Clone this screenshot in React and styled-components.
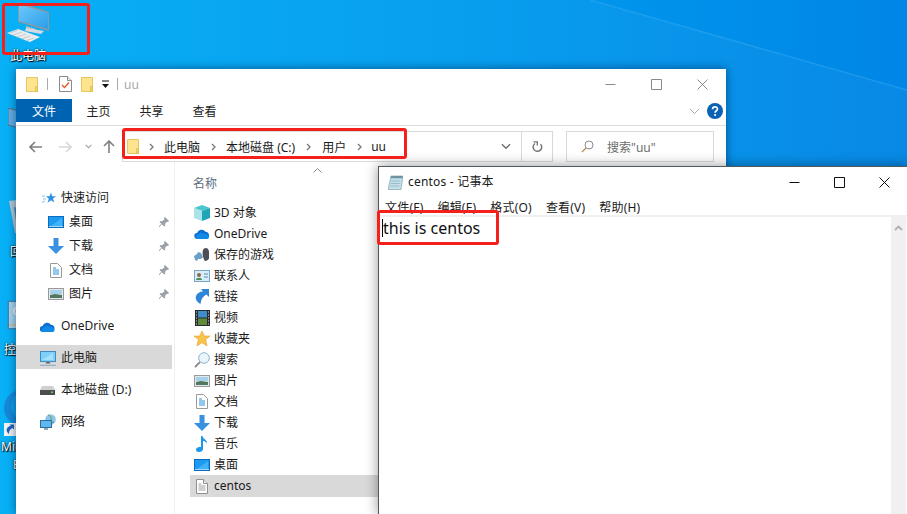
import React from "react";
import styled, { createGlobalStyle } from "styled-components";

const FONT = `"Noto Sans", "Noto Sans CJK SC", sans-serif`;

const Global = createGlobalStyle`
  html, body { margin: 0; padding: 0; background: #0090ea; }
  body { font-family: ${FONT}; font-size: 12px; color: #1a1a1a; overflow: hidden; }
  * { box-sizing: border-box; }
`;

const Desktop = styled.div`
  position: relative;
  width: 907px;
  height: 514px;
  overflow: hidden;
`;
const WallpaperSvg = styled.svg`
  position: absolute;
  left: 0;
  top: 0;
`;
const DesktopIcon = styled.div`
  position: absolute;
  left: ${(p) => p.$x}px;
  top: ${(p) => p.$y}px;
  line-height: 0;
`;
const DesktopLabel = styled.div`
  position: absolute;
  left: ${(p) => p.$x}px;
  top: ${(p) => p.$y}px;
  color: #fff;
  font-size: 12px;
  line-height: 16px;
  white-space: nowrap;
  text-shadow: 0 0 2px #000, 1px 1px 1px #000;
`;
const Annotation = styled.div`
  position: absolute;
  left: ${(p) => p.$x}px;
  top: ${(p) => p.$y}px;
  width: ${(p) => p.$w}px;
  height: ${(p) => p.$h}px;
  border: 3px solid #f3201c;
  border-radius: 3px;
`;

const Explorer = styled.section`
  position: absolute;
  left: 16px;
  top: 69px;
  width: 710px;
  height: 445px;
  background: #fff;
  display: flex;
  flex-direction: column;
  box-shadow: 0 0 9px rgba(0, 20, 60, 0.55);
`;
const TitleBar = styled.div`
  height: ${(p) => p.$h}px;
  flex: none;
  display: flex;
  align-items: center;
  padding-left: ${(p) => p.$pl}px;
`;
const QuickDivider = styled.span`
  width: 1px;
  height: 12px;
  background: #aaa;
  margin: 0 ${(p) => p.$r}px 0 ${(p) => p.$l}px;
`;
const QuickGap = styled.span`
  width: ${(p) => p.$w}px;
`;
const DimTitle = styled.span`
  color: #a8a8a8;
  font-size: 12px;
`;
const WindowControls = styled.div`
  margin-left: auto;
  display: flex;
  align-items: center;
  gap: ${(p) => p.$gap}px;
  padding-right: ${(p) => p.$pr}px;
  line-height: 0;
`;
const RibbonTabs = styled.div`
  height: 27px;
  flex: none;
  display: flex;
  align-items: flex-start;
  border-bottom: 1px solid #dcdcdc;
`;
const FileTab = styled.div`
  width: 56px;
  height: 23px;
  background: #0063b1;
  color: #fff;
  display: flex;
  align-items: center;
  justify-content: center;
`;
const RibbonTab = styled.div`
  width: 53px;
  height: 23px;
  display: flex;
  align-items: center;
  justify-content: center;
  color: #222;
`;
const RibbonEnd = styled.div`
  margin-left: auto;
  height: 23px;
  display: flex;
  align-items: center;
  gap: 7px;
  padding: 1px 3px 0 0;
  line-height: 0;
`;
const NavBar = styled.div`
  height: 36px;
  flex: none;
  display: flex;
  align-items: center;
  padding: 5px 12px 0 12px;
`;
const NavButton = styled.div`
  width: ${(p) => p.$w}px;
  margin-left: ${(p) => p.$ml || 0}px;
  flex: none;
  display: flex;
  justify-content: center;
  line-height: 0;
`;
const AddressBox = styled.div`
  width: 431px;
  height: 31px;
  flex: none;
  border: 1px solid #d9d9d9;
  display: flex;
  align-items: center;
`;
const Crumbs = styled.div`
  flex: 1;
  display: flex;
  align-items: center;
  padding-left: 4px;
  color: #1a1a1a;
`;
const CrumbSep = styled.span`
  display: flex;
  line-height: 0;
  margin: 0 ${(p) => p.$r}px 0 ${(p) => p.$l}px;
`;
const BoxButton = styled.div`
  width: ${(p) => p.$w}px;
  height: 100%;
  border-left: ${(p) => (p.$line ? "1px solid #d9d9d9" : "none")};
  display: flex;
  align-items: center;
  justify-content: center;
  line-height: 0;
`;
const SearchBox = styled.div`
  margin-left: 13px;
  width: 148px;
  height: 31px;
  flex: none;
  border: 1px solid #d9d9d9;
  display: flex;
  align-items: center;
  gap: 13px;
  padding-left: 14px;
  color: #6d6d6d;
`;
const Body = styled.div`
  flex: 1;
  display: flex;
  min-height: 0;
`;
const Sidebar = styled.nav`
  width: 159px;
  flex: none;
  border-right: 1px solid #efefef;
  padding-top: 23px;
`;
const SideRow = styled.div`
  width: 156px;
  height: 24px;
  display: flex;
  align-items: center;
  padding: 2px 0 0 ${(p) => p.$pl}px;
  gap: ${(p) => p.$gap}px;
  margin-top: ${(p) => p.$mt || 0}px;
  background: ${(p) => (p.$active ? "#d9d9d9" : "transparent")};
  line-height: 0;
`;
const RowText = styled.span`
  line-height: 16px;
  color: #1a1a1a;
`;
const Pin = styled.span`
  margin-left: auto;
  padding-right: 3px;
`;
const FileList = styled.div`
  flex: 1;
  min-width: 0;
  padding-left: 15px;
`;
const ListHeader = styled.div`
  height: 40px;
  display: flex;
  align-items: center;
  padding: 2px 0 0 3px;
  color: #5c6b7c;
  font-size: 12px;
`;
const SortCaret = styled.span`
  align-self: flex-start;
  margin: 4px 0 0 96px;
  line-height: 0;
`;
const FileRow = styled.div`
  width: 200px;
  height: ${(p) => (p.$active ? 22 : 21)}px;
  display: flex;
  align-items: center;
  gap: 4px;
  padding-left: 4px;
  background: ${(p) => (p.$active ? "#d9d9d9" : "transparent")};
  line-height: 0;
`;
const IconSlot = styled.span`
  width: 16px;
  height: 16px;
  flex: none;
  display: flex;
  align-items: center;
  justify-content: center;
`;

const Notepad = styled.section`
  position: absolute;
  left: 378px;
  top: 166px;
  width: 530px;
  height: 349px;
  background: #fff;
  border: 1px solid #4d5a60;
  display: flex;
  flex-direction: column;
  box-shadow: 0 0 12px rgba(0, 0, 0, 0.42);
`;
const NotepadTitle = styled.span`
  margin: 0 0 2px 5px;
  color: #1a1a1a;
  letter-spacing: 0.2px;
`;
const MenuBar = styled.div`
  height: 20px;
  flex: none;
  display: flex;
  align-items: center;
  gap: 14px;
  padding: 2px 0 0 6px;
  border-bottom: 2px solid #f0f0f0;
  color: #1a1a1a;
  letter-spacing: 0.2px;
`;
const EditorArea = styled.div`
  flex: 1;
  display: flex;
  min-height: 0;
`;
const EditorText = styled.div`
  flex: 1;
  padding: 2px 0 0 3px;
  font-size: 16px;
  line-height: 19px;
  color: #111;
  display: flex;
  align-items: flex-start;
`;
const Caret = styled.span`
  width: 1px;
  height: 18px;
  background: #000;
  flex: none;
`;
const Scrollbar = styled.div`
  width: 15px;
  flex: none;
  background: #f0f0f0;
  display: flex;
  justify-content: center;
  padding-top: 8px;
  line-height: 0;
  margin-right: 1px;
`;

/* ---------- drawings ---------- */
const Folder = ({ w = 12, h = 15 }) => (
  <svg width={w} height={h} viewBox="0 0 12 15">
    <path d="M.5.5h11v14H.5z" fill="#fde48e" stroke="#e8c65c" />
    <path d="M9.5 9.5h2v5h-2z" fill="#f5d46c" stroke="#dcb848" strokeWidth=".7" />
  </svg>
);
const Checklist = () => (
  <svg width="13" height="16" viewBox="0 0 13 16">
    <path d="M.5.5h8l4 4v11H.5z" fill="#fdfdfd" stroke="#8a8a8a" />
    <path d="M8.5.5v4h4" fill="#eee" stroke="#8a8a8a" />
    <path d="M3 9l2.5 2.5L10 6.5" fill="none" stroke="#e8592c" strokeWidth="1.4" />
  </svg>
);
const DropMini = () => (
  <svg width="9" height="9" viewBox="0 0 9 9">
    <path d="M1 1h7" stroke="#111" />
    <path d="M1 4h7L4.500 8z" fill="#111" />
  </svg>
);
const Minimize = ({ c }) => (
  <svg width="11" height="11" viewBox="0 0 11 11">
    <path d="M.5 5.500h10" stroke={c} />
  </svg>
);
const Maximize = ({ c }) => (
  <svg width="11" height="11" viewBox="0 0 11 11">
    <path d="M.5.5h10v10H.5z" fill="none" stroke={c} />
  </svg>
);
const CloseX = ({ c }) => (
  <svg width="11" height="11" viewBox="0 0 11 11">
    <path d="M.5.5l10 10M10.500.5l-10 10" fill="none" stroke={c} />
  </svg>
);
const Chevron = ({ c = "#999", w = 11, sw = 1 }) => (
  <svg width={w} height="7" viewBox="0 0 11 7">
    <path d="M1 1l4.500 4.500L10 1" fill="none" stroke={c} strokeWidth={sw} />
  </svg>
);
const HelpIcon = () => (
  <svg width="16" height="16" viewBox="0 0 16 16">
    <circle cx="8" cy="8" r="8" fill="#0a62b4" />
    <path d="M5.600 6.200c0-3 4.900-3 4.900-.2 0 1.800-2.400 1.800-2.400 3.700" fill="none" stroke="#fff" strokeWidth="1.700" />
    <circle cx="8.100" cy="12" r="1.100" fill="#fff" />
  </svg>
);
const ArrowLeft = ({ c }) => (
  <svg width="13" height="12" viewBox="0 0 13 12">
    <path d="M6 1L1 6l5 5M1 6h12" fill="none" stroke={c} strokeWidth="1.600" />
  </svg>
);
const ArrowRight = ({ c }) => (
  <svg width="13" height="12" viewBox="0 0 13 12">
    <path d="M7 1l5 5-5 5M12 6H0" fill="none" stroke={c} strokeWidth="1.600" />
  </svg>
);
const ArrowUp = ({ c }) => (
  <svg width="12" height="13" viewBox="0 0 12 13">
    <path d="M1 6l5-5 5 5M6 1v12" fill="none" stroke={c} strokeWidth="1.600" />
  </svg>
);
const CrumbChevron = () => (
  <svg width="5" height="8" viewBox="0 0 5 8">
    <path d="M1 1l3 3-3 3" fill="none" stroke="#777" strokeWidth="1.300" />
  </svg>
);
const Refresh = () => (
  <svg width="11" height="12" viewBox="0 0 11 12">
    <path d="M8.600 3.200A4.300 4.300 0 1 1 3 2.500" fill="none" stroke="#777" strokeWidth="1.500" />
    <path d="M1.500.8h3.800v3.600" fill="none" stroke="#777" strokeWidth="1.300" />
  </svg>
);
const Magnifier = () => (
  <svg width="13" height="13" viewBox="0 0 13 13">
    <circle cx="8" cy="5" r="4" fill="#fff" stroke="#8a8a8a" />
    <path d="M5 8L1 12" stroke="#c08a58" strokeWidth="1.300" />
  </svg>
);
const StarBlue = () => (
  <svg width="14" height="13" viewBox="0 0 14 13">
    <path d="M9 .5l1.200 3.700H14l-3 2.400 1.200 3.900L9 8.200l-3.500 2.500L6.800 6.800 4 4.200h3.600z" fill="#2f8fe0" />
    <path d="M0 4h3M1 7h3M0 10.500l3-1.500" stroke="#7cc2f2" />
  </svg>
);
const DesktopSmall = () => (
  <svg width="16" height="12" viewBox="0 0 16 12">
    <rect x=".5" y=".5" width="15" height="11" fill="#1e9af0" stroke="#0a6cbc" />
    <path d="M3 10L14 2v8z" fill="#3fb2f8" />
    <path d="M1 10.500h14" stroke="#fff" strokeOpacity=".6" />
  </svg>
);
const DownArrow = () => (
  <svg width="16" height="16" viewBox="0 0 16 16">
    <path d="M5.500 0h5v8H16l-8 8-8-8h5.500z" fill="#3a90e0" />
  </svg>
);
const DocBlue = () => (
  <svg width="12" height="15" viewBox="0 0 12 15">
    <path d="M.5.5h7l4 4v10H.5z" fill="#fff" stroke="#9a9a9a" />
    <path d="M3 5h3M3 7h6M3 9h6M3 11h6" stroke="#2a90d8" />
  </svg>
);
const Picture = () => (
  <svg width="16" height="12" viewBox="0 0 16 12">
    <rect x=".5" y=".5" width="15" height="11" fill="#dfe9ef" stroke="#9a9a9a" />
    <rect x="2" y="2" width="12" height="4" fill="#a7d0ea" />
    <path d="M2 7l5-1 7 1v3H2z" fill="#52775e" />
  </svg>
);
const PinIcon = () => (
  <svg width="10" height="10" viewBox="0 0 10 10">
    <path d="M6 0l4 4-1 1-1-.3-2 2 .2 1.800L5.200 9.500 .5 5 1.500 4l1.800.2 2-2L5 1z" fill="#9aa1a8" />
    <path d="M2.500 7L0 10" stroke="#9aa1a8" />
  </svg>
);
const Cloud = ({ w = 15 }) => (
  <svg width={w} height="11" viewBox="0 0 15 11">
    <path d="M3 11a3 3 0 0 1-.4-6A4.800 4.800 0 0 1 11 3.800 3.700 3.700 0 0 1 12 11z" fill="#0a6fd0" />
    <path d="M2 10.500a2.500 2.500 0 0 1 2-4c1-2 4-2.300 5.500-.6 2-.8 5 1 5 3.300-.2 1-1 1.700-2 1.800H3z" fill="#0f8ae8" />
  </svg>
);
const PcSmall = () => (
  <svg width="16" height="15" viewBox="0 0 16 15">
    <rect x=".5" y=".5" width="15" height="10" fill="#7fd0f8" stroke="#3f8cbe" />
    <path d="M2 9L13 2v7z" fill="#a4e0fb" />
    <path d="M6 11h4v1.500H6zM0 14.300h16" stroke="#90a6b8" />
  </svg>
);
const Drive = () => (
  <svg width="15" height="9" viewBox="0 0 15 9">
    <path d="M2 0h11l2 4v5H0V4z" fill="#cfcfcf" />
    <rect y="4" width="15" height="5" fill="#4d4d4d" />
    <rect x="11" y="5.500" width="2" height="1.500" fill="#5ad35a" />
  </svg>
);
const NetworkIcon = () => (
  <svg width="16" height="16" viewBox="0 0 16 16">
    <circle cx="10.500" cy="5.500" r="5.300" fill="#8cc4ea" />
    <path d="M8 1c3 1 4 3 2.500 5S12 9 14 8" stroke="#5f9e5c" fill="none" />
    <rect x=".5" y="6.500" width="11" height="7" fill="#5fb8ee" stroke="#2a6f9e" />
    <path d="M4 15h4" stroke="#6f8ba0" strokeWidth="1.500" />
  </svg>
);
const Cube = () => (
  <svg width="16" height="16" viewBox="0 0 16 16">
    <path d="M8 0l8 3-8 3-8-3z" fill="#49c6cf" />
    <path d="M0 3l8 3v10l-8-3z" fill="#a8e3ea" />
    <path d="M16 3L8 6v10l8-3z" fill="#1fa5b6" />
  </svg>
);
const Gamepad = () => (
  <svg width="16" height="16" viewBox="0 0 16 16">
    <path d="M9 3c1-3 6-3 6 2v6c0 2-3 3-4 3-2-2-3-8-2-11z" fill="#4c4f55" />
    <path d="M0 9l3-2 1-2 3 1 1 2 1 2-2 2H4l-1 2-2-1z" fill="#6c9fc8" />
  </svg>
);
const Contact = () => (
  <svg width="16" height="12" viewBox="0 0 16 12">
    <rect x=".5" y=".5" width="15" height="11" fill="#d9ebf7" stroke="#7aa7c8" />
    <circle cx="5" cy="5" r="2" fill="#8a6a4c" />
    <path d="M2 10c0-3 6-3 6 0z" fill="#4f8f5a" />
    <path d="M10 4h4M10 7h4" stroke="#5a8fb8" />
  </svg>
);
const LinkArrow = () => (
  <svg width="14" height="15" viewBox="0 0 14 15">
    <path d="M14 0v8l-2.500-2.500C8 7 6 10 5.500 15 2 13 0 10 1 7c1-3 4-4.500 7-4.800L6 0z" fill="#2f86d8" />
  </svg>
);
const Film = () => (
  <svg width="15" height="16" viewBox="0 0 15 16">
    <rect width="15" height="16" fill="#2a2a30" />
    <rect x="3" y="1" width="9" height="6.500" fill="#3f8ec8" />
    <rect x="3" y="8.500" width="9" height="6.500" fill="#5f8a3a" />
    <path d="M1 2h1M1 5h1M1 8h1M1 11h1M1 14h1M13 2h1M13 5h1M13 8h1M13 11h1M13 14h1" stroke="#ddd" />
  </svg>
);
const StarGold = () => (
  <svg width="16" height="15" viewBox="0 0 16 15">
    <path d="M8 0l2.300 5H16l-4.300 3.600L13 15l-5-3.300L3 15l1.300-6.400L0 5h5.700z" fill="#f9c24a" stroke="#e4a030" strokeWidth=".6" />
  </svg>
);
const BigLens = () => (
  <svg width="16" height="16" viewBox="0 0 16 16">
    <circle cx="10" cy="6" r="5.300" fill="#e9f4fb" stroke="#8fb3cc" />
    <path d="M6 10l-5 5" stroke="#8b8b8b" strokeWidth="1.800" />
  </svg>
);
const Note = () => (
  <svg width="12" height="16" viewBox="0 0 12 16">
    <path d="M5 0h1.500c.3 3 5 3.500 4.500 7.500C10 5.500 8 5 7 5v8c0 2-2 3-4 3s-3-1-3-2.300C0 12 2 10.500 5 11z" fill="#1b97ec" />
  </svg>
);
const TextDoc = () => (
  <svg width="12" height="15" viewBox="0 0 12 15">
    <path d="M.5.5h7l4 4v10H.5z" fill="#fff" stroke="#8f8f8f" />
    <path d="M7.500.5v4h4" fill="#eee" stroke="#8f8f8f" />
    <path d="M2.500 5h3M2.500 7h7M2.500 9h7M2.500 11h7" stroke="#a0a0a0" />
  </svg>
);
const NotepadIcon = () => (
  <svg width="15" height="15" viewBox="0 0 15 15">
    <path d="M3 1h12l-2 13.500H0z" fill="#c4deea" stroke="#7fa3b4" strokeWidth=".7" />
    <path d="M3 1h12l-.4 2.200H2.700z" fill="#6f93a4" />
    <path d="M3 6h9M2.600 8.500h9M2.200 11h9" stroke="#98bccb" />
  </svg>
);
const ScrollUp = () => (
  <svg width="9" height="6" viewBox="0 0 9 6">
    <path d="M1 5l3.500-3.500L8 5" fill="none" stroke="#b0b0b0" strokeWidth="1.800" />
  </svg>
);
const Caretup = () => (
  <svg width="9" height="5" viewBox="0 0 9 5">
    <path d="M.5 4.500l4-4 4 4" fill="none" stroke="#8a8a8a" />
  </svg>
);
const BigComputer = () => (
  <svg width="52" height="44" viewBox="0 0 52 44">
    <defs>
      <linearGradient id="scr" x1="0" y1="0" x2="1" y2="1">
        <stop offset="0" stopColor="#6ec8fb" />
        <stop offset="1" stopColor="#2a9ee8" />
      </linearGradient>
    </defs>
    <path d="M26 26l10 3v3l-10-3z" fill="#b9bec4" />
    <path d="M26 28l18 3-3 3-16-3z" fill="#d7dadd" />
    <path d="M18 2l31 10v19L18 22z" fill="#8f989f" />
    <path d="M19 4l29 9v16L19 21z" fill="url(#scr)" />
    <path d="M7 33l11-4 22 8-10 5z" fill="#e9ebed" />
    <path d="M10 33l8-3M13 35l9-3M17 37l9-3M21 39l9-3M25 41l9-3" stroke="#b9bec2" strokeWidth=".7" />
  </svg>
);
const Recycle = () => (
  <svg width="24" height="36" viewBox="0 0 24 36">
    <path d="M0 4l24-3-3 35H6z" fill="#b3c9d4" />
    <path d="M5 10l7 2 1 14-6-2z" fill="#3d8ec2" />
  </svg>
);
const ControlPanel = () => (
  <svg width="28" height="30" viewBox="0 0 28 30">
    <rect x=".5" y=".5" width="27" height="29" fill="#3e87b5" />
    <rect x="2" y="2" width="24" height="26" fill="#a7d4ec" />
    <circle cx="11" cy="11" r="4" fill="none" stroke="#e8eef2" strokeWidth="2" />
    <path d="M2 25h24" stroke="#e0b060" />
  </svg>
);
const EdgeShape = () => (
  <svg width="36" height="36" viewBox="0 0 36 36">
    <circle cx="18" cy="18" r="18" fill="#1589d8" />
    <circle cx="22" cy="16" r="15" fill="#10a0e8" />
  </svg>
);
const ShortcutBadge = () => (
  <svg width="12" height="13" viewBox="0 0 12 13">
    <rect width="12" height="13" fill="#f2f2f2" />
    <path d="M10 1.500v5L8.500 5C6 6 5 8 5 11 3 9.500 2 7.500 3 5.500S6 3 7 3L5.500 1.500z" fill="#1c64c0" />
  </svg>
);
const SmallPc = () => (
  <svg width="22" height="30" viewBox="0 0 22 30">
    <path d="M0 0l22 6v17L0 17z" fill="#5fb2e8" stroke="#5f6b74" />
    <path d="M8 22h6v6H8z" fill="#1f6fb0" />
  </svg>
);

const Wallpaper = () => (
  <WallpaperSvg width="907" height="514" viewBox="0 0 907 514">
    <defs>
      <linearGradient id="wall" x1="0" y1="0" x2="1" y2="0">
        <stop offset="0" stopColor="#00aef6" />
        <stop offset="0.55" stopColor="#009aee" />
        <stop offset="1" stopColor="#0086e6" />
      </linearGradient>
    </defs>
    <rect width="907" height="514" fill="url(#wall)" />
    <polygon points="590,0 907,90 907,514 0,514 0,0" fill="#fff" fillOpacity="0.03" />
    <line x1="590" y1="0" x2="907" y2="90" stroke="#3aaaf2" strokeOpacity="0.45" strokeWidth="1.500" />
  </WallpaperSvg>
);

const quick = [
  ["桌面", <DesktopSmall />],
  ["下载", <DownArrow />],
  ["文档", <DocBlue />],
  ["图片", <Picture />],
];

const files = [
  ["3D 对象", <Cube />],
  ["OneDrive", <Cloud w={16} />],
  ["保存的游戏", <Gamepad />],
  ["联系人", <Contact />],
  ["链接", <LinkArrow />],
  ["视频", <Film />],
  ["收藏夹", <StarGold />],
  ["搜索", <BigLens />],
  ["图片", <Picture />],
  ["文档", <DocBlue />],
  ["下载", <DownArrow />],
  ["音乐", <Note />],
  ["桌面", <DesktopSmall />],
  ["centos", <TextDoc />],
];

export default function App() {
  return (
    <Desktop>
      <Global />
      <Wallpaper />

      <DesktopIcon $x={0} $y={0}><BigComputer /></DesktopIcon>
      <DesktopLabel $x={10} $y={48}>此电脑</DesktopLabel>
      <DesktopIcon $x={8} $y={108}><SmallPc /></DesktopIcon>
      <DesktopIcon $x={9} $y={197}><Recycle /></DesktopIcon>
      <DesktopLabel $x={10} $y={244}>回收站</DesktopLabel>
      <DesktopIcon $x={7} $y={300}><ControlPanel /></DesktopIcon>
      <DesktopLabel $x={4} $y={342}>控制面板</DesktopLabel>
      <DesktopIcon $x={4} $y={390}><EdgeShape /></DesktopIcon>
      <DesktopIcon $x={4} $y={423}><ShortcutBadge /></DesktopIcon>
      <DesktopLabel $x={1} $y={439}>Microsoft</DesktopLabel>
      <DesktopLabel $x={13} $y={457}>Edge</DesktopLabel>

      <Explorer>
        <TitleBar $h={30} $pl={10}>
          <Folder />
          <QuickDivider $l={9} $r={11} />
          <Checklist />
          <QuickGap $w={9} />
          <Folder />
          <QuickGap $w={8} />
          <DropMini />
          <QuickDivider $l={7} $r={6} />
          <DimTitle>uu</DimTitle>
          <WindowControls $gap={35} $pr={18}>
            <Minimize c="#8a8a8a" />
            <Maximize c="#8a8a8a" />
            <CloseX c="#8a8a8a" />
          </WindowControls>
        </TitleBar>
        <RibbonTabs>
          <FileTab>文件</FileTab>
          <RibbonTab>主页</RibbonTab>
          <RibbonTab>共享</RibbonTab>
          <RibbonTab>查看</RibbonTab>
          <RibbonEnd>
            <Chevron c="#a8a8a8" />
            <HelpIcon />
          </RibbonEnd>
        </RibbonTabs>
        <NavBar>
          <NavButton $w={15}><ArrowLeft c="#7f7f7f" /></NavButton>
          <NavButton $w={29} $ml={8}><ArrowRight c="#d8d8d8" /></NavButton>
          <NavButton $w={16}><Chevron c="#9a9a9a" w={7} sw={1.6} /></NavButton>
          <NavButton $w={26}><ArrowUp c="#7f7f7f" /></NavButton>
          <AddressBox>
            <Crumbs>
              <Folder />
              <CrumbSep $l={10} $r={10}><CrumbChevron /></CrumbSep>
              此电脑
              <CrumbSep $l={11} $r={10}><CrumbChevron /></CrumbSep>
              本地磁盘 (C:)
              <CrumbSep $l={11} $r={11}><CrumbChevron /></CrumbSep>
              用户
              <CrumbSep $l={11} $r={9}><CrumbChevron /></CrumbSep>
              uu
            </Crumbs>
            <BoxButton $w={30}><Chevron c="#6f6f6f" sw={1.6} w={10} /></BoxButton>
            <BoxButton $w={31} $line><Refresh /></BoxButton>
          </AddressBox>
          <SearchBox>
            <Magnifier />
            搜索"uu"
          </SearchBox>
        </NavBar>
        <Body>
          <Sidebar>
            <SideRow $pl={26} $gap={5}>
              <StarBlue />
              <RowText>快速访问</RowText>
            </SideRow>
            {quick.map(([label, icon]) => (
              <SideRow key={label} $pl={32} $gap={5}>
                <IconSlot>{icon}</IconSlot>
                <RowText>{label}</RowText>
                <Pin><PinIcon /></Pin>
              </SideRow>
            ))}
            <SideRow $pl={24} $gap={6} $mt={8}>
              <Cloud />
              <RowText>OneDrive</RowText>
            </SideRow>
            <SideRow $pl={24} $gap={5} $mt={8} $active>
              <PcSmall />
              <RowText>此电脑</RowText>
            </SideRow>
            <SideRow $pl={24} $gap={6} $mt={8}>
              <Drive />
              <RowText>本地磁盘 (D:)</RowText>
            </SideRow>
            <SideRow $pl={24} $gap={5} $mt={8}>
              <NetworkIcon />
              <RowText>网络</RowText>
            </SideRow>
          </Sidebar>
          <FileList>
            <ListHeader>
              名称
              <SortCaret><Caretup /></SortCaret>
            </ListHeader>
            {files.map(([label, icon]) => (
              <FileRow key={label} $active={label === "centos"}>
                <IconSlot>{icon}</IconSlot>
                <RowText>{label}</RowText>
              </FileRow>
            ))}
          </FileList>
        </Body>
      </Explorer>

      <Notepad>
        <TitleBar $h={30} $pl={9}>
          <NotepadIcon />
          <NotepadTitle>centos - 记事本</NotepadTitle>
          <WindowControls $gap={34} $pr={17}>
            <Minimize c="#111" />
            <Maximize c="#111" />
            <CloseX c="#111" />
          </WindowControls>
        </TitleBar>
        <MenuBar>
          <span>文件(F)</span>
          <span>编辑(E)</span>
          <span>格式(O)</span>
          <span>查看(V)</span>
          <span>帮助(H)</span>
        </MenuBar>
        <EditorArea>
          <EditorText>
            <Caret />
            this is centos
          </EditorText>
          <Scrollbar><ScrollUp /></Scrollbar>
        </EditorArea>
      </Notepad>

      <Annotation $x={2} $y={3} $w={88} $h={52} />
      <Annotation $x={122} $y={128} $w={285} $h={31} />
      <Annotation $x={377} $y={210} $w={122} $h={35} />
    </Desktop>
  );
}
